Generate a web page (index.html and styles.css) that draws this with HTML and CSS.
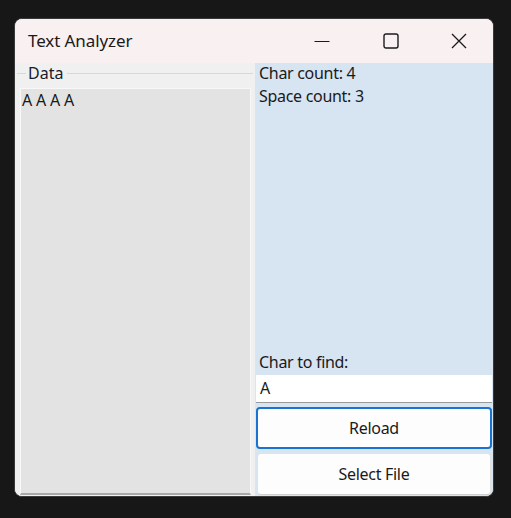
FILE: index.html
```html
<!DOCTYPE html>
<html>
<head>
<meta charset="utf-8">
<link rel="stylesheet" href="styles.css">
</head>
<body>
<div class="window">
  <div class="titlebar">
    <div class="title">Text Analyzer</div>
    <div class="caption">
      <div class="cbtn"><svg width="16" height="16" viewBox="0 0 16 16"><line x1="0.5" y1="8.5" x2="15.5" y2="8.5" stroke="#1a1a1a" stroke-width="1.2"/></svg></div>
      <div class="cbtn"><svg width="16" height="16" viewBox="0 0 16 16"><rect x="1" y="1" width="14" height="14" rx="2" fill="none" stroke="#1a1a1a" stroke-width="1.4"/></svg></div>
      <div class="cbtn"><svg width="16" height="16" viewBox="0 0 16 16"><path d="M1 1 L15 15 M15 1 L1 15" stroke="#1a1a1a" stroke-width="1.3" fill="none"/></svg></div>
    </div>
  </div>
  <div class="client">
    <div class="group">
      <div class="group-head">
        <span class="gline short"></span>
        <span class="glabel">Data</span>
        <span class="gline long"></span>
      </div>
      <div class="datebox">A A A A</div>
    </div>
    <div class="side">
      <div class="lbl">Char count: 4</div>
      <div class="lbl">Space count: 3</div>
      <div class="spacer"></div>
      <div class="lbl find">Char to find:</div>
      <div class="input">A</div>
      <div class="btn primary">Reload</div>
      <div class="btn">Select File</div>
    </div>
  </div>
</div>
</body>
</html>
```

FILE: styles.css
```css
* { box-sizing: border-box; }
html, body { margin: 0; padding: 0; }
body {
  background: #171717;
  width: 511px;
  height: 518px;
  padding: 18px 0 0 14px;
  font-family: "Noto Sans", "Open Sans", sans-serif;
  color: #1a1a1a;
}
.window {
  width: 480px;
  height: 479px;
  border: 1px solid #3a3a3a;
  border-radius: 8px;
  overflow: hidden;
  display: flex;
  flex-direction: column;
  background: #f0f0f0;
}
.titlebar {
  height: 44px;
  background: #f9f0f1;
  display: flex;
  align-items: center;
  flex: none;
}
.title {
  font-size: 17px;
  padding-left: 13px;
  padding-bottom: 1px;
  flex: 1;
  letter-spacing: -0.1px;
}
.caption { display: flex; height: 100%; }
.cbtn {
  width: 69px;
  display: flex;
  align-items: center;
  justify-content: center;
}
.cbtn:last-child { width: 68px; }
.client {
  flex: 1;
  display: grid;
  grid-template-columns: 240px 238px;
  min-height: 0;
}
.group {
  background: #f0f0f0;
  display: flex;
  flex-direction: column;
  padding: 0 4px 1px 5px;
}
.group-head {
  height: 25px;
  display: flex;
  align-items: center;
  padding-bottom: 5px;
}
.gline { height: 1px; background: #d8d8d8; }
.gline.short { width: 9px; margin-left: -3px; }
.gline.long { flex: 1; margin-right: -2px; }
.glabel { font-size: 16px; padding: 0 4px 0 2px; line-height: 20px; color: #1a1a2a; }
.datebox {
  flex: 1;
  background: #e3e3e3;
  border: 1px solid #f8f8f8;
  border-bottom: 2px solid #a8a8a8;
  font-size: 16px;
  line-height: 20px;
  padding: 1px 1px;
  letter-spacing: -0.2px;
}
.side {
  background: #d7e4f2;
  display: flex;
  flex-direction: column;
  padding: 0 1px 1px 1px;
}
.lbl {
  font-size: 16px;
  line-height: 23px;
  padding-left: 3px;
  letter-spacing: -0.3px;
}
.lbl:first-child { margin-top: -1px; }
.spacer { flex: 1; }
.find { margin-bottom: 1px; }
.input {
  height: 28px;
  background: #ffffff;
  border-bottom: 1px solid #9a9a9a;
  font-size: 16px;
  line-height: 27px;
  padding-left: 4px;
  margin-bottom: 4px;
}
.btn {
  height: 42px;
  background: #fdfdfd;
  border: 1px solid #e2e2e2;
  border-bottom-color: #cfcfcf;
  border-radius: 4px;
  display: flex;
  align-items: center;
  justify-content: center;
  font-size: 16px;
  letter-spacing: -0.3px;
  margin: 0 1px;
}
.btn.primary {
  border: 2px solid #1a73d0;
  margin: 0 0 4px 0;
}
```
